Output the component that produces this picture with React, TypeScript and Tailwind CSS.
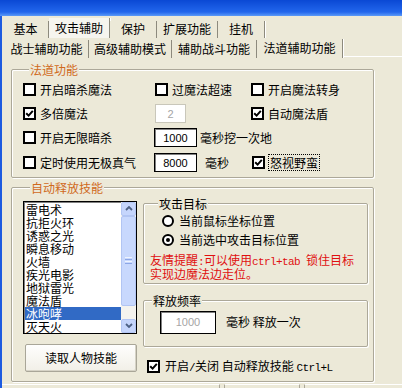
import React from 'react';

const Mono = ({ children }: { children: React.ReactNode }) => (
  <span className="font-['Liberation_Mono',monospace] text-[11px] tracking-[-0.6px]">{children}</span>
);

function Check({ checked }: { checked?: boolean }) {
  return (
    <span className="w-[13px] h-[13px] border-2 border-black bg-white flex items-center justify-center shrink-0">
      {checked && (
        <svg width="9" height="9" viewBox="0 0 9 9">
          <path d="M1.2 4.2 L3.6 6.6 L7.8 1.8" stroke="#000" strokeWidth="2" fill="none" />
        </svg>
      )}
    </span>
  );
}

function Radio({ on }: { on?: boolean }) {
  return (
    <span className="w-[12px] h-[12px] rounded-full border-2 border-black bg-white flex items-center justify-center shrink-0">
      {on && <span className="w-[4px] h-[4px] rounded-full bg-black" />}
    </span>
  );
}

function Opt({ checked, label, focus }: { checked?: boolean; label: string; focus?: boolean }) {
  return (
    <div className="flex items-center gap-[4px]">
      <Check checked={checked} />
      <span className={focus ? 'outline-1 outline-dotted outline-black leading-[15px] px-[1px]' : ''}>{label}</span>
    </div>
  );
}

function Box({ value, disabled, w }: { value: string; disabled?: boolean; w: string }) {
  return (
    <div
      className={
        disabled
          ? `${w} h-[19px] border border-[#c9c7ba] bg-white text-[#a5a5a5] flex items-center justify-center font-['Liberation_Sans',sans-serif] text-[11px]`
          : `${w} h-[19px] border border-black shadow-[inset_1px_1px_0_#808080] bg-white text-black flex items-center justify-center font-['Liberation_Sans',sans-serif] text-[11px]`
      }
    >
      {value}
    </div>
  );
}

const skills = ['雷电术', '抗拒火环', '诱惑之光', '瞬息移动', '火墙', '疾光电影', '地狱雷光', '魔法盾', '冰咆哮', '灭天火'];

function Tab({ label, w, sel, h }: { label: string; w: string; sel?: boolean; h: string }) {
  return (
    <div
      className={`${w} ${h} flex items-center justify-center border-r border-r-[#8d8a7d] shadow-[1px_0_0_#fff] ${
        sel ? 'bg-[#f6f5ef]' : 'bg-[#ece9d8]'
      }`}
    >
      {label}
    </div>
  );
}

function Chevron({ up }: { up?: boolean }) {
  return (
    <svg width="8" height="5" viewBox="0 0 8 5">
      <path d={up ? 'M1 4 L4 1 L7 4' : 'M1 1 L4 4 L7 1'} stroke="#4d6185" strokeWidth="1.8" fill="none" />
    </svg>
  );
}

const group = 'border border-[#aca899] shadow-[inset_1px_1px_0_#fff,1px_1px_0_#fff] rounded-[2px]';

export default function App() {
  return (
    <div className="w-[402px] h-[388px] bg-[#ece9d8] overflow-hidden font-['Noto_Sans_CJK_SC',sans-serif] text-[12px] text-black leading-[14px]">
      <div className="h-[16px] bg-[linear-gradient(to_bottom,#0a48d4,#2266ec_75%,#5b9af8)]" />
      <div className="h-[372px] border-l-2 border-l-[#1d5be0] flex flex-col">
        <div className="h-[22px] flex items-end pl-[1px]">
          <Tab label="基本" w="w-[46px]" h="h-[17px]" />
          <Tab label="攻击辅助" w="w-[61px]" h="h-[20px]" sel />
          <Tab label="保护" w="w-[47px]" h="h-[17px]" />
          <Tab label="扩展功能" w="w-[61px]" h="h-[17px]" />
          <Tab label="挂机" w="w-[47px]" h="h-[17px]" />
        </div>
        <div className="h-[20px] flex items-end pl-[3px]">
          <Tab label="战士辅助功能" w="w-[84px]" h="h-[18px]" />
          <Tab label="高级辅助模式" w="w-[83px]" h="h-[18px]" />
          <Tab label="辅助战斗功能" w="w-[85px]" h="h-[18px]" />
          <div className="w-[86px] h-[19px] bg-[#ece9d8] border-r border-r-[#8d8a7d] shadow-[1px_0_0_#fff] flex justify-center pt-[2px]">
            法道辅助功能
          </div>
          <div className="flex-1 h-[1px] bg-white mb-[1px]" />
        </div>

        <fieldset className={`ml-[9px] mt-[5px] w-[363px] pl-[11px] pt-[1px] pb-[1px] ${group}`}>
          <legend className="ml-[6px] px-[1px] leading-[14px] text-[#d06a1c] bg-[#ece9d8]">法道功能</legend>
          <div className="h-[24px] flex items-center">
            <div className="w-[132px]"><Opt label="开启暗杀魔法" /></div>
            <div className="w-[96px]"><Opt label="过魔法超速" /></div>
            <Opt label="开启魔法转身" />
          </div>
          <div className="h-[24px] flex items-center">
            <div className="w-[132px]"><Opt checked label="多倍魔法" /></div>
            <div className="w-[96px]"><Box value="2" disabled w="w-[31px]" /></div>
            <Opt checked label="自动魔法盾" />
          </div>
          <div className="h-[24px] flex items-center">
            <div className="w-[131px]"><Opt label="开启无限暗杀" /></div>
            <Box value="1000" w="w-[43px]" />
            <span className="ml-[3px]">毫秒挖一次地</span>
          </div>
          <div className="h-[26px] flex items-center">
            <div className="w-[131px]"><Opt label="定时使用无极真气" /></div>
            <Box value="8000" w="w-[43px]" />
            <span className="ml-[8px] w-[47px]">毫秒</span>
            <Opt checked label="怒视野蛮" focus />
          </div>
        </fieldset>

        <fieldset className={`ml-[9px] mt-[3px] w-[363px] h-[202px] pl-[11px] ${group}`}>
          <legend className="ml-[7px] px-[1px] leading-[14px] text-[#d06a1c] bg-[#ece9d8]">自动释放技能</legend>
          <div className="flex">
            <div className="flex flex-col">
              <div className="mt-[6px] w-[114px] h-[133px] border border-black shadow-[inset_1px_1px_0_#808080] bg-white flex overflow-hidden">
                <div className="flex-1 pt-[1px] pl-[1px] overflow-hidden">
                  {skills.map((s, i) => (
                    <div
                      key={s}
                      className={`h-[13px] leading-[13px] pl-[1px] ${i === 8 ? 'bg-[#316ac5] text-white' : ''}`}
                    >
                      {s}
                    </div>
                  ))}
                </div>
                <div className="w-[15px] flex flex-col bg-[#f4f3ee]">
                  <div className="h-[14px] rounded-[2px] bg-[#c5d5fc] border border-[#b2c5f3] flex items-center justify-center">
                    <Chevron up />
                  </div>
                  <div className="h-[90px] rounded-[2px] bg-[#c8d8fd] border border-[#b2c5f3] flex flex-col items-center justify-center gap-[1px]">
                    <span className="w-[7px] h-[1px] bg-[#eef3fe]" />
                    <span className="w-[7px] h-[1px] bg-[#8ca6e6]" />
                    <span className="w-[7px] h-[1px] bg-[#eef3fe]" />
                    <span className="w-[7px] h-[1px] bg-[#8ca6e6]" />
                  </div>
                  <div className="flex-1" />
                  <div className="h-[14px] rounded-[2px] bg-[#c5d5fc] border border-[#b2c5f3] flex items-center justify-center">
                    <Chevron />
                  </div>
                </div>
              </div>
              <button className="mt-[10px] ml-[2px] w-[112px] h-[28px] rounded-[2px] border border-[#a9a698] bg-[linear-gradient(to_bottom,#fefefd,#f1efe7)] shadow-[inset_-1px_-1px_0_#d6d3c6]">
                读取人物技能
              </button>
            </div>

            <div className="ml-[6px] w-[225px] flex flex-col">
              <fieldset className={`mt-[2px] pl-[6px] pt-[1px] pb-[3px] ${group}`}>
                <legend className="ml-[8px] px-[1px] leading-[14px] bg-[#ece9d8]">攻击目标</legend>
                <div className="h-[19px] flex items-center gap-[5px] ml-[12px]">
                  <Radio />
                  <span>当前鼠标坐标位置</span>
                </div>
                <div className="h-[19px] flex items-center gap-[5px] ml-[12px]">
                  <Radio on />
                  <span>当前选中攻击目标位置</span>
                </div>
                <div className="mt-[4px] leading-[12px] text-[#e01010]">
                  <div>
                    友情提醒<Mono>:</Mono>可以使用<Mono>ctrl+tab </Mono>锁住目标
                  </div>
                  <div>实现边魔法边走位。</div>
                </div>
              </fieldset>

              <fieldset className={`mt-[10px] pb-[12px] ${group}`}>
                <legend className="ml-[8px] px-[1px] leading-[14px] bg-[#ece9d8]">释放频率</legend>
                <div className="mt-[3px] flex items-center">
                  <div className="ml-[16px] w-[56px] h-[23px] border border-black shadow-[inset_1px_1px_0_#808080] bg-white text-[#a5a5a5] flex items-center justify-center font-['Liberation_Sans',sans-serif] text-[11px]">
                    1000
                  </div>
                  <span className="ml-[10px]">毫秒 释放一次</span>
                </div>
              </fieldset>

              <div className="mt-[12px] ml-[4px] flex items-center gap-[5px]">
                <Check checked />
                <span>
                  开启<Mono>/</Mono>关闭 自动释放技能 <Mono>Ctrl+L</Mono>
                </span>
              </div>
            </div>
          </div>
        </fieldset>

        <div className="mt-[2px] flex h-[4px]">
          <div className="w-[218px] border-t border-t-white border-r border-r-[#aca899]" />
          <div className="ml-[4px] w-[76px] border-t border-t-white border-l border-l-[#aca899] border-r border-r-[#aca899]" />
          <div className="ml-[4px] flex-1 border-t border-t-white border-l border-l-[#aca899]" />
        </div>
      </div>
    </div>
  );
}
